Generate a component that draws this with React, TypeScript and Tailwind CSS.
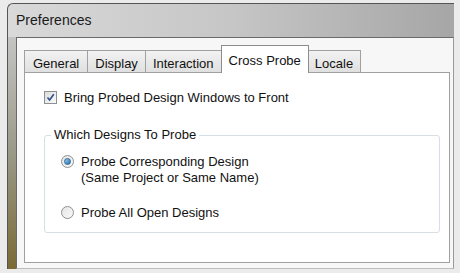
const tabs = ["General", "Display", "Interaction", "Cross Probe", "Locale"];

const Radio = ({ checked }: { checked: boolean }) => (
  <span className="w-[13px] h-[13px] rounded-full border border-[#8e8f8f] bg-gradient-to-br from-[#e6e6e6] to-[#f8f8f8] flex items-center justify-center shrink-0">
    {checked ? <span className="w-[7px] h-[7px] rounded-full bg-gradient-to-br from-[#9ad0f0] to-[#1c6fb0] border border-[#2a6496]" /> : null}
  </span>
);

export default function App() {
  return (
    <div className="w-[460px] h-[273px] bg-[#ebebeb] pt-[3px] pl-[7px] overflow-hidden" style={{ fontFamily: '"Liberation Sans", Arial, sans-serif' }}>
      <div className="w-[447px] h-[266px] rounded-tl-[6px] border-l border-t border-[#555] bg-gradient-to-r from-[#d9d9d9] via-[#c6c6c6] to-[#a6a6a6] flex flex-col">
        <div className="h-[33px] pl-[8px] pt-[6px] text-[14px] text-[#1a1a1a]">Preferences</div>
        <div className="flex flex-1">
          <div className="w-[8px] bg-gradient-to-b from-[#c4c4c4] via-[#9a9a88] to-[#7a6a34]" />
          <div className="flex-1 bg-[#f7f7f7] border-l border-t border-[#6a6a6a] border-r border-r-[#9a9a9a] border-b border-b-[#bdbdbd] pl-[7px] pr-[3px] pt-[6px] flex flex-col">
            <div className="flex items-end h-[28px] text-[13px] text-[#111]">
              {tabs.map((t) =>
                t === "Cross Probe" ? (
                  <div key={t} className="h-[28px] px-[7px] pt-[5px] bg-white border border-b-0 border-[#8c8c8c] relative top-[1px] -mx-[1px] z-10">{t}</div>
                ) : (
                  <div key={t} className="h-[22px] px-[7px] pt-[3px] bg-gradient-to-b from-[#f2f2f2] to-[#e0e0e0] border border-b-0 border-[#a0a0a0] -ml-px first:ml-0 first:px-[8px]">{t}</div>
                )
              )}
            </div>
            <div className="h-[191px] bg-white border border-[#a0a0a0] pt-[15px] pl-[19px] pr-[9px] text-[13px] text-[#111]">
              <div className="flex items-center gap-[7px]">
                <span className="w-[13px] h-[13px] border border-[#8e8f8f] bg-gradient-to-br from-[#dcdcdc] to-[#fafafa] flex items-center justify-center">
                  <svg width="9" height="9" viewBox="0 0 9 9"><path d="M1.5 4.5 L3.6 7 L7.8 1.2" fill="none" stroke="#2b4e8c" strokeWidth="1.6" /></svg>
                </span>
                <span>Bring Probed Design Windows to Front</span>
              </div>
              <div className="mt-[27px] relative h-[98px] border border-[#d5dfe5] rounded-[3px] pt-[18px] pl-[16px]">
                <span className="absolute -top-[9px] left-[6px] bg-white px-[3px] leading-[16px]">Which Designs To Probe</span>
                <div className="flex items-start gap-[7px]">
                  <span className="mt-[1px]"><Radio checked /></span>
                  <div className="leading-[16px]">Probe Corresponding Design<br />(Same Project or Same Name)</div>
                </div>
                <div className="flex items-center gap-[7px] mt-[17px]">
                  <Radio checked={false} />
                  <span>Probe All Open Designs</span>
                </div>
              </div>
            </div>
          </div>
        </div>
      </div>
    </div>
  );
}
